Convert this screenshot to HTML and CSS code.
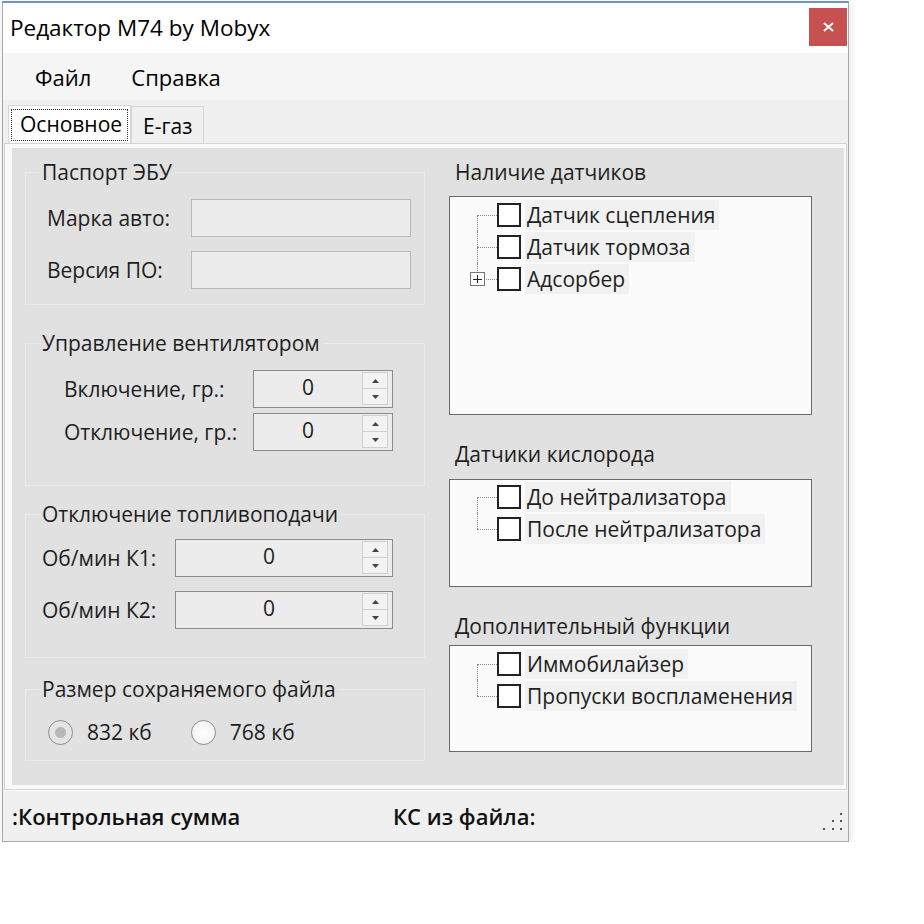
FILE: index.html
```html
<!DOCTYPE html>
<html lang="ru">
<head>
    <meta charset="UTF-8">
    <title>Редактор М74 by Mobyx</title>
    <link rel="stylesheet" href="styles.css">
</head>
<body>
    <div class="window">
        <div class="titlebar">
            <span class="title">Редактор М74 by Mobyx</span>
            <div class="close">
                <svg width="11" height="10" viewBox="0 0 11 10"><path d="M1 1 L10 9 M10 1 L1 9" stroke="#fff" stroke-width="2"/></svg>
            </div>
        </div>

        <div class="menubar">
            <span class="menu-item">Файл</span>
            <span class="menu-item">Справка</span>
        </div>

        <div class="tabstrip">
            <div class="tab tab-active"><span class="focus">Основное</span></div>
            <div class="tab">E-газ</div>
        </div>

        <div class="tabpage">
            <div class="panel">
                <div class="col-left">
                    <fieldset class="group group-passport">
                        <legend>Паспорт ЭБУ</legend>
                        <div class="row row-passport">
                            <span class="label">Марка авто:</span>
                            <div class="textbox"></div>
                        </div>
                        <div class="row row-passport">
                            <span class="label">Версия ПО:</span>
                            <div class="textbox"></div>
                        </div>
                    </fieldset>

                    <fieldset class="group group-fan">
                        <legend>Управление вентилятором</legend>
                        <div class="row row-fan">
                            <span class="label">Включение, гр.:</span>
                            <div class="spin spin-short">
                                <span class="spin-value">0</span>
                                <div class="spin-buttons">
                                    <span class="spin-btn"><svg width="7" height="4" viewBox="0 0 7 4"><path d="M0 4 L3.5 0 L7 4 Z" fill="#444"/></svg></span>
                                    <span class="spin-btn"><svg width="7" height="4" viewBox="0 0 7 4"><path d="M0 0 L3.5 4 L7 0 Z" fill="#444"/></svg></span>
                                </div>
                            </div>
                        </div>
                        <div class="row row-fan">
                            <span class="label">Отключение, гр.:</span>
                            <div class="spin spin-short">
                                <span class="spin-value">0</span>
                                <div class="spin-buttons">
                                    <span class="spin-btn"><svg width="7" height="4" viewBox="0 0 7 4"><path d="M0 4 L3.5 0 L7 4 Z" fill="#444"/></svg></span>
                                    <span class="spin-btn"><svg width="7" height="4" viewBox="0 0 7 4"><path d="M0 0 L3.5 4 L7 0 Z" fill="#444"/></svg></span>
                                </div>
                            </div>
                        </div>
                    </fieldset>

                    <fieldset class="group group-fuel">
                        <legend>Отключение топливоподачи</legend>
                        <div class="row row-fuel">
                            <span class="label">Об/мин К1:</span>
                            <div class="spin spin-long">
                                <span class="spin-value">0</span>
                                <div class="spin-buttons">
                                    <span class="spin-btn"><svg width="7" height="4" viewBox="0 0 7 4"><path d="M0 4 L3.5 0 L7 4 Z" fill="#444"/></svg></span>
                                    <span class="spin-btn"><svg width="7" height="4" viewBox="0 0 7 4"><path d="M0 0 L3.5 4 L7 0 Z" fill="#444"/></svg></span>
                                </div>
                            </div>
                        </div>
                        <div class="row row-fuel">
                            <span class="label">Об/мин К2:</span>
                            <div class="spin spin-long">
                                <span class="spin-value">0</span>
                                <div class="spin-buttons">
                                    <span class="spin-btn"><svg width="7" height="4" viewBox="0 0 7 4"><path d="M0 4 L3.5 0 L7 4 Z" fill="#444"/></svg></span>
                                    <span class="spin-btn"><svg width="7" height="4" viewBox="0 0 7 4"><path d="M0 0 L3.5 4 L7 0 Z" fill="#444"/></svg></span>
                                </div>
                            </div>
                        </div>
                    </fieldset>

                    <fieldset class="group group-size">
                        <legend>Размер сохраняемого файла</legend>
                        <div class="radios">
                            <span class="radio-item"><span class="radio radio-checked"></span>832 кб</span>
                            <span class="radio-item"><span class="radio"></span>768 кб</span>
                        </div>
                    </fieldset>
                </div>

                <div class="col-right">
                    <div class="section-title">Наличие датчиков</div>
                    <ul class="tree tree-sensors">
                        <li><span class="check"></span><span class="item-text">Датчик сцепления</span></li>
                        <li><span class="check"></span><span class="item-text">Датчик тормоза</span></li>
                        <li><span class="expander"></span><span class="check"></span><span class="item-text">Адсорбер</span></li>
                    </ul>

                    <div class="section-title section-oxygen">Датчики кислорода</div>
                    <ul class="tree tree-oxygen">
                        <li><span class="check"></span><span class="item-text">До нейтрализатора</span></li>
                        <li><span class="check"></span><span class="item-text">После нейтрализатора</span></li>
                    </ul>

                    <div class="section-title section-extra">Дополнительный функции</div>
                    <ul class="tree tree-extra">
                        <li><span class="check"></span><span class="item-text">Иммобилайзер</span></li>
                        <li><span class="check"></span><span class="item-text">Пропуски воспламенения</span></li>
                    </ul>
                </div>
            </div>
        </div>

        <div class="statusbar">
            <span class="status-sum">:Контрольная сумма</span>
            <span class="status-file">КС из файла:</span>
            <svg class="grip" width="22" height="20" viewBox="0 0 22 20">
                <rect x="18" y="1" width="2" height="2" fill="#555"/>
                <rect x="10" y="8" width="2" height="2" fill="#555"/>
                <rect x="18" y="8" width="2" height="2" fill="#555"/>
                <rect x="1" y="16" width="2" height="2" fill="#555"/>
                <rect x="10" y="16" width="2" height="2" fill="#555"/>
                <rect x="18" y="16" width="2" height="2" fill="#555"/>
            </svg>
        </div>
    </div>
</body>
</html>
```

FILE: styles.css
```css
body {
    margin: 0;
    background-color: #fff;
    font-family: 'Open Sans', 'Noto Sans', sans-serif;
    color: #1e1e1e;
}

.window {
    width: 845px;
    margin: 1px 0 0 2px;
    border: 1px solid #a8a8a8;
    border-top: 2px solid #7396bb;
    background-color: #f0f0f0;
    box-shadow: 1px 2px 8px rgba(0, 0, 0, 0.12);
}

/* title bar */
.titlebar {
    height: 50px;
    display: flex;
    justify-content: space-between;
    align-items: flex-start;
    background-color: #fff;
}

.title {
    padding-left: 7px;
    font-size: 22.5px;
    line-height: 50px;
    color: #000;
}

.close {
    width: 38px;
    height: 38px;
    margin: 5px 1px 0 0;
    display: flex;
    align-items: center;
    justify-content: center;
    background-color: #c75050;
}

/* menu */
.menubar {
    height: 47px;
    display: flex;
    align-items: center;
    gap: 40px;
    padding-left: 32px;
    background-color: #f5f5f5;
    font-size: 22px;
    color: #000;
}

/* tabs */
.tabstrip {
    height: 43px;
    display: flex;
    align-items: flex-end;
    padding-left: 5px;
}

.tab {
    height: 36px;
    padding: 0 11px;
    border: 1px solid #d6d6d6;
    border-bottom: none;
    background-color: #f0f0f0;
    font-size: 21px;
    line-height: 38px;
    color: #000;
}

.tab-active {
    height: 38px;
    width: 123px;
    padding: 3px 2px 2px 2px;
    box-sizing: border-box;
    background-color: #fff;
    line-height: normal;
}

.focus {
    display: block;
    height: 100%;
    box-sizing: border-box;
    border: 1px dotted #333;
    padding-left: 8px;
    line-height: 28px;
}

.tabpage {
    margin: 0 1px;
    padding: 4px 2px 4px 7px;
    border: 1px solid #d4d4d4;
    background-color: #f9f9f9;
}

.panel {
    height: 637px;
    box-sizing: border-box;
    display: flex;
    gap: 24px;
    padding: 9px 0 0 13px;
    background-color: #e1e1e1;
}

/* left column */
.col-left {
    width: 400px;
}

.group {
    margin: 0;
    padding: 0;
    border: 1px solid #ebebeb;
    min-width: 0;
}

.group legend {
    margin-left: 13px;
    padding: 0 3px;
    font-size: 21px;
    line-height: 30px;
}

.group-passport { padding: 12px 0 15px; }
.group-passport .row + .row { margin-top: 14px; }

.group-fan { margin-top: 23px; padding: 12px 0 34px; }
.group-fan .row + .row { margin-top: 5px; }

.group-fuel { margin-top: 13px; padding: 10px 0 28px; }
.group-fuel .row + .row { margin-top: 14px; }

.group-size { margin-top: 16px; padding: 14px 0 14px; }

.row {
    display: flex;
    align-items: center;
    font-size: 21px;
}

.label {
    box-sizing: border-box;
    flex-shrink: 0;
}

.row-passport .label { width: 165px; padding-left: 21px; }
.row-fan .label { width: 227px; padding-left: 38px; }
.row-fuel .label { width: 149px; padding-left: 16px; }

.textbox {
    width: 220px;
    height: 38px;
    box-sizing: border-box;
    border: 1px solid #b9b9b9;
    background-color: #ebebeb;
}

.spin {
    height: 38px;
    box-sizing: border-box;
    display: flex;
    border: 1px solid #8c8c8c;
    background-color: #ececec;
}

.spin-short { width: 140px; }
.spin-long { width: 218px; }

.spin-value {
    flex: 1;
    text-align: center;
    font-size: 21px;
    line-height: 33px;
}

.spin-buttons {
    width: 26px;
    margin: 1px 4px 2px 0;
    display: flex;
    flex-direction: column;
}

.spin-btn {
    flex: 1;
    display: flex;
    align-items: center;
    justify-content: center;
    border: 1px solid #d0d0d0;
    background-color: #f3f3f3;
}

.spin-btn + .spin-btn { border-top: none; }

.radios {
    display: flex;
    align-items: center;
    gap: 39px;
    padding-left: 22px;
    font-size: 21px;
}

.radio-item {
    display: flex;
    align-items: center;
    gap: 14px;
}

.radio {
    width: 25px;
    height: 25px;
    box-sizing: border-box;
    border-radius: 50%;
    border: 1px solid #8e8e8e;
    background: radial-gradient(circle, #fff 0, #f4f4f4 70%, #e8e8e8 100%);
}

.radio-checked {
    background: radial-gradient(circle, #b8b8b8 0 5px, #e4e4e4 6px);
}

/* right column */
.col-right {
    width: 363px;
}

.section-title {
    padding-left: 6px;
    font-size: 21px;
    line-height: 30px;
}

.section-oxygen { margin-top: 24px; }
.section-extra { margin-top: 24px; }

.tree {
    list-style: none;
    margin: 9px 0 0;
    padding: 2px 0 0;
    border: 1px solid #6a6a6a;
    background-color: #fbfbfb;
    box-sizing: border-box;
}

.tree-sensors { height: 219px; }
.tree-oxygen { height: 108px; margin-top: 10px; padding-top: 1px; }
.tree-extra { height: 107px; margin-top: 4px; }

.tree li {
    position: relative;
    height: 32px;
    display: flex;
    align-items: center;
    padding-left: 47px;
    font-size: 21px;
}

.tree li::before {
    content: '';
    position: absolute;
    left: 27px;
    top: 0;
    bottom: 0;
    border-left: 1px dotted #8a8a8a;
}

.tree li:first-child::before { top: 16px; }
.tree li:last-child::before { bottom: 16px; }

.tree li::after {
    content: '';
    position: absolute;
    left: 27px;
    top: 16px;
    width: 20px;
    border-top: 1px dotted #8a8a8a;
}

.expander {
    position: absolute;
    left: 20px;
    top: 9px;
    width: 15px;
    height: 14px;
    box-sizing: border-box;
    border: 1px solid #777;
    background:
        linear-gradient(#222, #222) center / 9px 1px no-repeat,
        linear-gradient(#222, #222) center / 1px 8px no-repeat,
        #fff;
    z-index: 1;
}

.check {
    width: 24px;
    height: 24px;
    box-sizing: border-box;
    border: 2px solid #222;
    background-color: #fff;
    flex-shrink: 0;
}

.item-text {
    margin-left: 4px;
    padding: 0 4px 0 2px;
    background-color: #f1f1f1;
    line-height: 30px;
}

/* status bar */
.statusbar {
    height: 50px;
    display: flex;
    align-items: center;
    padding-left: 9px;
    border-top: 1px solid #fff;
    background-color: #f0f0f0;
    font-size: 22px;
    font-weight: 600;
    color: #111;
}

.status-sum {
    width: 381px;
}

.grip {
    margin-left: auto;
    margin-right: 4px;
    align-self: flex-end;
    margin-bottom: 9px;
}
```
